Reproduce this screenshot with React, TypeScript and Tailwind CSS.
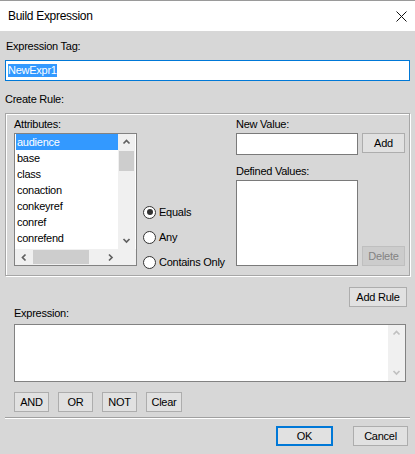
import React from 'react'

const attributes = ['audience', 'base', 'class', 'conaction', 'conkeyref', 'conref', 'conrefend']

function Chevron({ dir, color = '#606060' }: { dir: 'up' | 'down' | 'left' | 'right'; color?: string }) {
  const d = {
    up: 'M1.5 5.5 L4.5 2.5 L7.5 5.5',
    down: 'M1.5 3 L4.5 6 L7.5 3',
    left: 'M5.5 1.5 L2.5 4.5 L5.5 7.5',
    right: 'M3 1.5 L6 4.5 L3 7.5',
  }[dir]
  return (
    <svg width="9" height="9" viewBox="0 0 9 9">
      <path d={d} fill="none" stroke={color} strokeWidth="1.7" />
    </svg>
  )
}

function WinButton({ label, className = '', disabled = false, primary = false }: { label: string; className?: string; disabled?: boolean; primary?: boolean }) {
  return (
    <div
      className={`h-[20px] flex items-center justify-center leading-none ${
        disabled
          ? 'bg-[#cccccc] border border-[#bfbfbf] text-[#838383]'
          : primary
          ? 'bg-[#e1e1e1] border-2 border-[#0078d7] text-black'
          : 'bg-[#e1e1e1] border border-[#adadad] text-black'
      } ${className}`}
    >
      {label}
    </div>
  )
}

function Radio({ label, checked = false }: { label: string; checked?: boolean }) {
  return (
    <div className="h-[16px] flex items-center">
      <div className="w-[13px] h-[13px] rounded-full border border-[#333333] bg-white flex items-center justify-center">
        {checked && <div className="w-[6px] h-[6px] rounded-full bg-[#333333]" />}
      </div>
      <span className="ml-[3px]">{label}</span>
    </div>
  )
}

export default function App() {
  return (
    <div className="w-[415px] h-[454px] bg-[#d7d7d7] font-['Liberation_Sans',Arial,sans-serif] text-[11px] leading-[13px] tracking-[-0.25px] text-black overflow-hidden">
      {/* Title bar */}
      <div className="h-[31px] bg-white border-t border-[#9a9a9a] flex items-center justify-between pl-[8px] pr-[8px]">
        <span className="text-[12px] tracking-[-0.3px]">Build Expression</span>
        <svg width="11" height="11" viewBox="0 0 11 11">
          <path d="M0.5 0.5 L10.5 10.5 M10.5 0.5 L0.5 10.5" stroke="#111" strokeWidth="1" />
        </svg>
      </div>

      <div className="px-[5px]">
        <div className="mt-[9px] pl-px">Expression Tag:</div>
        <div className="mt-[7px] h-[21px] border border-[#0078d7] bg-white flex items-center pl-[2px]">
          <span className="bg-[#3399ff] text-white leading-[13px]">NewExpr1</span>
        </div>

        <div className="mt-[12px]">Create Rule:</div>

        {/* Group box */}
        <div className="mt-[7px] h-[163px] border border-[#a6a6a6] shadow-[inset_1px_1px_0_#ffffff,1px_1px_0_#ffffff] flex pl-[8px] pt-[4px]">
          {/* Attributes */}
          <div className="w-[123px]">
            <div>Attributes:</div>
            <div className="mt-[2px] h-[133px] border border-[#828282] bg-white flex flex-col">
              <div className="flex h-[115px]">
                <div className="w-[103px] overflow-hidden pl-px">
                  {attributes.map((a, i) => (
                    <div
                      key={a}
                      className={`h-[16px] leading-[16px] pl-px whitespace-nowrap ${i === 0 ? 'bg-[#3399ff] text-white' : ''}`}
                    >
                      {a}
                    </div>
                  ))}
                </div>
                <div className="w-[17px] bg-[#f0f0f0] flex flex-col">
                  <div className="h-[17px] flex items-center justify-center">
                    <Chevron dir="up" />
                  </div>
                  <div className="h-[20px] mx-[1px] bg-[#cdcdcd]" />
                  <div className="flex-1" />
                  <div className="h-[17px] flex items-center justify-center">
                    <Chevron dir="down" />
                  </div>
                </div>
              </div>
              <div className="flex h-[16px] bg-[#f0f0f0]">
                <div className="w-[18px] flex items-center justify-center">
                  <Chevron dir="left" />
                </div>
                <div className="w-[56px] my-[1px] bg-[#cdcdcd]" />
                <div className="flex-1" />
                <div className="w-[17px] flex items-center justify-center">
                  <Chevron dir="right" />
                </div>
                <div className="w-[17px]" />
              </div>
            </div>
          </div>

          {/* Match options */}
          <div className="w-[93px] ml-[6px] pt-[86px] flex flex-col gap-[9px]">
            <Radio label="Equals" checked />
            <Radio label="Any" />
            <Radio label="Contains Only" />
          </div>

          {/* Values */}
          <div className="w-[169px]">
            <div>New Value:</div>
            <div className="mt-[2px] flex items-start">
              <div className="w-[122px] h-[22px] border border-[#7a7a7a] bg-white" />
              <WinButton label="Add" className="ml-[4px] w-[43px]" />
            </div>
            <div className="mt-[10px]">Defined Values:</div>
            <div className="mt-[2px] flex items-end">
              <div className="w-[122px] h-[86px] border border-[#7a7a7a] bg-white" />
              <WinButton label="Delete" disabled className="ml-[4px] w-[43px]" />
            </div>
          </div>
        </div>

        <div className="mt-[11px] flex justify-end pr-[3px]">
          <WinButton label="Add Rule" className="w-[58px]" />
        </div>

        <div className="pl-[9px]">Expression:</div>
        <div className="mt-[4px] ml-[9px] w-[392px] h-[58px] border border-[#828282] bg-white flex justify-end">
          <div className="w-[17px] bg-[#f0f0f0] flex flex-col justify-between">
            <div className="h-[17px] flex items-center justify-center">
              <Chevron dir="up" color="#c0c0c0" />
            </div>
            <div className="h-[17px] flex items-center justify-center">
              <Chevron dir="down" color="#c0c0c0" />
            </div>
          </div>
        </div>

        <div className="mt-[10px] pl-[9px] flex gap-[9px]">
          <WinButton label="AND" className="w-[35px]" />
          <WinButton label="OR" className="w-[35px]" />
          <WinButton label="NOT" className="w-[35px]" />
          <WinButton label="Clear" className="w-[36px]" />
        </div>

        <div className="mt-[5px] border-t border-[#a0a0a0] border-b border-b-white" />

        <div className="mt-[7px] flex justify-end gap-[20px] pr-[2px]">
          <WinButton label="OK" primary className="w-[57px]" />
          <WinButton label="Cancel" className="w-[55px]" />
        </div>
      </div>
    </div>
  )
}
